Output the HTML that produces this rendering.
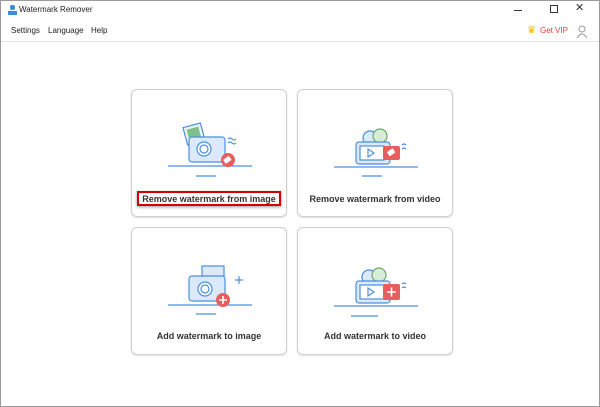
<!DOCTYPE html><html><head><style>
body{margin:0;width:600px;height:407px;background:#fff;font-family:"Liberation Sans",sans-serif;position:relative;overflow:hidden}
.frame{position:absolute;inset:0;border:1px solid #9a9a9a;box-sizing:border-box}
.title{position:absolute;left:19px;top:5px;font-size:8px;color:#222}
.menu{position:absolute;top:26px;font-size:8px;color:#222}
.sep{position:absolute;left:1px;right:1px;top:41px;height:1px;background:#e6e6e6}
.card{position:absolute;width:156px;height:128px;border:1px solid #cfcfcf;border-radius:6px;box-shadow:0 1px 2px rgba(0,0,0,.12);box-sizing:border-box}
.lab{position:absolute;left:0;right:0;text-align:center;font-size:9px;font-weight:bold;color:#333}
svg{position:absolute;left:0;top:0}
</style></head><body>
<div class="frame"></div>
<svg width="14" height="14" style="left:6px;top:4px"><rect x="4" y="1" width="5" height="5" rx="2" fill="#3a8ee0"/><rect x="2" y="7" width="9" height="4" fill="#3a8ee0"/></svg>
<div class="title">Watermark Remover</div>
<div style="position:absolute;left:514px;top:10px;width:8px;height:1px;background:#333"></div>
<div style="position:absolute;left:550px;top:5px;width:6px;height:6px;border:1px solid #333"></div>
<div style="position:absolute;left:575px;top:1px;font-size:11px;color:#333">✕</div>
<div class="menu" style="left:11px">Settings</div>
<div class="menu" style="left:48px">Language</div>
<div class="menu" style="left:91px">Help</div>
<div style="position:absolute;left:527px;top:25px;font-size:10px;color:#f5b400">♛</div>
<div class="menu" style="left:540px;color:#e43c3c">Get VIP</div>
<svg width="12" height="14" style="left:576px;top:25px"><circle cx="6" cy="4" r="3" fill="none" stroke="#999"/><path d="M1 13 Q6 5 11 13" fill="none" stroke="#999"/></svg>
<div class="sep"></div>

<div class="card" style="left:131px;top:89px">
<svg width="156" height="128"><g fill="none" stroke="#4a8fe0" stroke-width="1.2">
<rect x="53" y="35" width="18" height="18" transform="rotate(-15 62 44)" fill="#eaf4ea"/>
<rect x="56" y="38" width="12" height="11" fill="#7ec08a" stroke="none" transform="rotate(-15 62 44)"/>
<rect x="57" y="47" width="36" height="25" rx="3" fill="#dbe9fb"/><circle cx="72" cy="59" r="7" fill="#fff"/><circle cx="72" cy="59" r="4"/>
<line x1="36" y1="76" x2="120" y2="76"/><line x1="64" y1="86" x2="84" y2="86"/>
<path d="M96 49q2-2 4 0t4 0M96 53q2-2 4 0t4 0"/></g>
<circle cx="96" cy="70" r="7" fill="#e85d5d"/><rect x="92" y="67" width="7" height="5" fill="#fff" transform="rotate(-35 96 70)"/></svg>
<div style="position:absolute;left:5px;top:101px;width:144px;height:15px;border:2px solid #d40000;box-sizing:border-box;box-shadow:0 1px 3px rgba(0,0,0,.4)"></div>
<div class="lab" style="top:104px">Remove watermark from image</div></div>

<div class="card" style="left:297px;top:89px">
<svg width="156" height="128"><g fill="none" stroke="#4a8fe0" stroke-width="1.2">
<circle cx="72" cy="48" r="7" fill="#dbe9fb"/><circle cx="82" cy="46" r="7" fill="#d8ecd8" stroke="#6aaa6a"/>
<rect x="58" y="52" width="34" height="22" rx="3" fill="#dbe9fb"/><rect x="62" y="56" width="24" height="14" fill="#fff"/>
<path d="M70 59l6 4-6 4z"/><line x1="36" y1="77" x2="120" y2="77"/><line x1="64" y1="86" x2="84" y2="86"/>
<path d="M104 55q2-2 4 0M104 59q2-2 4 0"/></g>
<rect x="85" y="56" width="17" height="14" rx="2" fill="#e85d5d"/><rect x="90" y="60" width="7" height="5" fill="#fff" transform="rotate(-35 93 63)"/></svg>
<div class="lab" style="top:104px">Remove watermark from video</div></div>

<div class="card" style="left:131px;top:227px">
<svg width="156" height="128"><g fill="none" stroke="#4a8fe0" stroke-width="1.2">
<rect x="70" y="38" width="22" height="16" fill="#dbe9fb"/>
<rect x="57" y="48" width="36" height="25" rx="3" fill="#dbe9fb"/><circle cx="73" cy="61" r="7" fill="#fff"/><circle cx="73" cy="61" r="4"/>
<line x1="36" y1="77" x2="120" y2="77"/><line x1="64" y1="86" x2="84" y2="86"/>
<path d="M103 52h8M107 48v8"/></g>
<circle cx="91" cy="72" r="7" fill="#e85d5d"/><path d="M87 72h8M91 68v8" stroke="#fff" stroke-width="1.6"/></svg>
<div class="lab" style="top:103px">Add watermark to image</div></div>

<div class="card" style="left:297px;top:227px">
<svg width="156" height="128"><g fill="none" stroke="#4a8fe0" stroke-width="1.2">
<circle cx="71" cy="49" r="7" fill="#dbe9fb"/><circle cx="81" cy="47" r="7" fill="#d8ecd8" stroke="#6aaa6a"/>
<rect x="58" y="53" width="34" height="22" rx="3" fill="#dbe9fb"/><rect x="62" y="57" width="24" height="14" fill="#fff"/>
<path d="M70 60l6 4-6 4z"/><line x1="36" y1="78" x2="120" y2="78"/><line x1="53" y1="88" x2="80" y2="88"/>
<path d="M104 56q2-2 4 0M104 60q2-2 4 0"/></g>
<rect x="85" y="56" width="17" height="16" rx="2" fill="#e85d5d"/><path d="M89 64h9M93.5 59.5v9" stroke="#fff" stroke-width="1.6"/></svg>
<div class="lab" style="top:103px">Add watermark to video</div></div>
</body></html>
